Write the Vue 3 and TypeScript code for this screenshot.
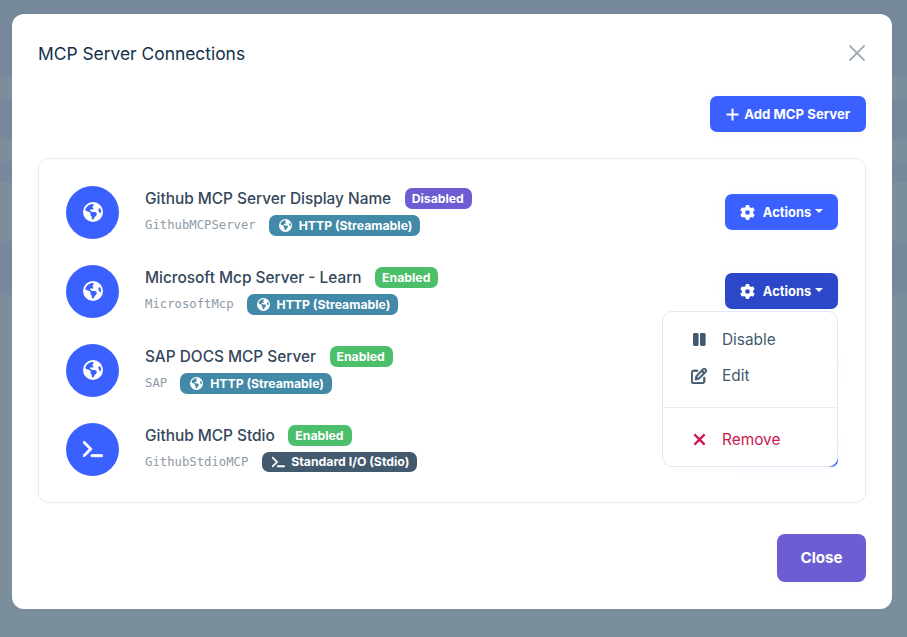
<script setup lang="ts">
interface Server {
  name: string
  id: string
  enabled: boolean
  stdio: boolean
}
const servers: Server[] = [
  { name: 'Github MCP Server Display Name', id: 'GithubMCPServer', enabled: false, stdio: false },
  { name: 'Microsoft Mcp Server - Learn', id: 'MicrosoftMcp', enabled: true, stdio: false },
  { name: 'SAP DOCS MCP Server', id: 'SAP', enabled: true, stdio: false },
  { name: 'Github MCP Stdio', id: 'GithubStdioMCP', enabled: true, stdio: true },
]
const earth = 'M57.7 193l9.4 16.4c8.3 14.5 21.9 25.2 38 29.8L163 255.7c17.2 4.9 29 20.6 29 38.5v39.9c0 11 6.2 21 16 25.9s16 14.9 16 25.9v39c0 15.6 14.9 26.9 29.9 22.6c16.1-4.6 28.6-17.5 32.7-33.8l2.8-11.2c4.2-16.9 15.2-31.4 30.3-40l8.1-4.6c15-8.5 24.2-24.5 24.2-41.7v-8.3c0-12.7-5.1-24.9-14.1-33.9l-3.9-3.9c-9-9-21.2-14.1-33.9-14.1H257c-11.1 0-22.1-2.9-31.8-8.4l-34.5-19.7c-4.3-2.5-7.6-6.5-9.2-11.2c-3.2-9.6 1.1-20 10.2-24.5l5.9-3c6.6-3.3 14.3-3.9 21.3-1.5l23.2 7.7c8.2 2.7 17.2-.4 21.9-7.5c4.7-7 4.2-16.3-1.2-22.8l-13.6-16.3c-10-12-9.9-29.5 .3-41.3l15.7-18.3c8.8-10.3 10.2-25 3.5-36.7l-2.4-4.2c-3.5-.2-6.9-.3-10.4-.3C163.1 48 84.4 108.9 57.7 193zM464 256c0-36.8-9.6-71.4-26.4-101.5L412 164.8c-15.7 6.3-23.8 23.8-18.5 39.8l16.9 50.7c3.5 10.4 12 18.3 22.6 20.9l29.1 7.3c1.2-9 1.8-18.2 1.8-27.5zM0 256a256 256 0 1 1 512 0A256 256 0 1 1 0 256z'
const terminal = 'M9.4 86.6C-3.1 74.1-3.1 53.9 9.4 41.4s32.8-12.5 45.3 0l192 192c12.5 12.5 12.5 32.8 0 45.3l-192 192c-12.5 12.5-32.8 12.5-45.3 0s-12.5-32.8 0-45.3L178.7 256 9.4 86.6zM256 416H544c17.7 0 32 14.3 32 32s-14.3 32-32 32H256c-17.7 0-32-14.3-32-32s14.3-32 32-32z'
const gear = 'M495.9 166.6c3.2 8.7 .5 18.4-6.4 24.6l-43.3 39.4c1.1 8.3 1.7 16.8 1.7 25.4s-.6 17.1-1.7 25.4l43.3 39.4c6.9 6.2 9.6 15.9 6.4 24.6c-4.4 11.9-9.7 23.3-15.8 34.3l-4.7 8.1c-6.6 11-14 21.4-22.1 31.2c-5.9 7.2-15.7 9.6-24.5 6.8l-55.7-17.7c-13.4 10.3-28.2 18.9-44 25.4l-12.5 57.1c-2 9.1-9 16.3-18.2 17.8c-13.8 2.3-28 3.5-42.5 3.5s-28.7-1.2-42.5-3.5c-9.2-1.5-16.2-8.7-18.2-17.8l-12.5-57.1c-15.8-6.5-30.6-15.1-44-25.4L83.1 425.9c-8.8 2.8-18.6 .3-24.5-6.8c-8.1-9.8-15.5-20.2-22.1-31.2l-4.7-8.1c-6.1-11-11.4-22.4-15.8-34.3c-3.2-8.7-.5-18.4 6.4-24.6l43.3-39.4C64.6 273.1 64 264.6 64 256s.6-17.1 1.7-25.4L22.4 191.2c-6.9-6.2-9.6-15.9-6.4-24.6c4.4-11.9 9.7-23.3 15.8-34.3l4.7-8.1c6.6-11 14-21.4 22.1-31.2c5.9-7.2 15.7-9.6 24.5-6.8l55.7 17.7c13.4-10.3 28.2-18.9 44-25.4l12.5-57.1c2-9.1 9-16.3 18.2-17.8C227.3 1.2 241.5 0 256 0s28.7 1.2 42.5 3.5c9.2 1.5 16.2 8.7 18.2 17.8l12.5 57.1c15.8 6.5 30.6 15.1 44 25.4l55.7-17.7c8.8-2.8 18.6-.3 24.5 6.8c8.1 9.8 15.5 20.2 22.1 31.2l4.7 8.1c6.1 11 11.4 22.4 15.8 34.3zM256 336a80 80 0 1 0 0-160 80 80 0 1 0 0 160z'
const pen = 'M441 58.9L453.1 71c9.4 9.4 9.4 24.6 0 33.9L424 134.1 377.9 88 407 58.9c9.4-9.4 24.6-9.4 33.9 0zM209.8 256.2L344 121.9 390.1 168 255.8 302.2c-2.9 2.9-6.5 5-10.4 6.1l-58.5 16.7 16.7-58.5c1.1-3.9 3.2-7.5 6.1-10.4zM373.1 25L175.8 222.2c-8.7 8.7-15 19.4-18.3 31.1l-28.6 100c-2.4 8.4-.1 17.4 6.1 23.6s15.2 8.5 23.6 6.1l100-28.6c11.8-3.4 22.5-9.7 31.1-18.3L487 138.9c28.1-28.1 28.1-73.7 0-101.8L474.9 25C446.8-3.1 401.2-3.1 373.1 25zM88 64C39.4 64 0 103.4 0 152V424c0 48.6 39.4 88 88 88H360c48.6 0 88-39.4 88-88V312c0-13.3-10.7-24-24-24s-24 10.7-24 24V424c0 22.1-17.9 40-40 40H88c-22.1 0-40-17.9-40-40V152c0-22.1 17.9-40 40-40H200c13.3 0 24-10.7 24-24s-10.7-24-24-24H88z'
</script>

<template>
  <div class="backdrop">
    <section class="modal">
      <header class="head">
        <h2 class="title">MCP Server Connections</h2>
        <svg class="close-x" viewBox="0 0 16 16" aria-label="Close">
          <path d="M.5 .5L15.5 15.5M15.5 .5L.5 15.5" />
        </svg>
      </header>

      <div class="toolbar">
        <button class="btn add">
          <svg class="plus" viewBox="0 0 13 13"><path d="M6.5 .5V12.5M.5 6.5H12.5" /></svg>
          Add MCP Server
        </button>
      </div>

      <div class="card">
        <div v-for="(s, i) in servers" :key="s.id" class="row">
          <div class="avatar">
            <svg v-if="s.stdio" class="avatar-term" viewBox="0 0 576 512"><path :d="terminal" /></svg>
            <svg v-else class="avatar-earth" viewBox="0 0 512 512"><path :d="earth" /></svg>
          </div>
          <div class="info">
            <div class="line-top">
              <span class="name">{{ s.name }}</span>
              <span class="pill status" :class="s.enabled ? 'on' : 'off'">{{ s.enabled ? 'Enabled' : 'Disabled' }}</span>
            </div>
            <div class="line-bottom">
              <code class="id">{{ s.id }}</code>
              <span class="pill kind" :class="s.stdio ? 'stdio' : 'http'">
                <svg v-if="s.stdio" class="kind-term" viewBox="0 0 576 512"><path :d="terminal" /></svg>
                <svg v-else class="kind-earth" viewBox="0 0 512 512"><path :d="earth" /></svg>
                {{ s.stdio ? 'Standard I/O (Stdio)' : 'HTTP (Streamable)' }}
              </span>
            </div>
          </div>
          <div class="actions">
            <button class="btn act" :class="{ active: i === 1 }">
              <svg class="gear" viewBox="0 0 512 512"><path :d="gear" /></svg>
              Actions<i class="caret"></i>
            </button>
            <div v-if="i === 1" class="menu">
              <div class="item">
                <svg class="i-pause" viewBox="0 0 13 13"><rect x="0" y="0" width="5.6" height="13" rx="1.4" /><rect x="7" y="0" width="5.6" height="13" rx="1.4" /></svg>
                <span>Disable</span>
              </div>
              <div class="item">
                <svg class="i-pen" viewBox="0 0 512 512"><path :d="pen" /></svg>
                <span>Edit</span>
              </div>
              <div class="divider"></div>
              <div class="item danger">
                <svg class="i-x" viewBox="0 0 14 14"><path d="M1.5 1.5L12.5 12.5M12.5 1.5L1.5 12.5" /></svg>
                <span>Remove</span>
              </div>
            </div>
          </div>
        </div>
      </div>

      <footer class="foot">
        <button class="btn close"><span class="close-label">Close</span></button>
      </footer>
    </section>
  </div>
</template>

<style>
html, body { margin: 0; background: #7a8e9c; }
</style>

<style scoped>
.backdrop {
  width: 907px;
  height: 637px;
  box-sizing: border-box;
  padding: 14px 15px 28px 12px;
  background: linear-gradient(
    to bottom,
    #76899a 0 77px,
    #7a8e9c 77px 99px,
    #76899a 99px 139px,
    #7a8e9c 139px 161px,
    #76899a 161px 182px,
    #7a8e9c 182px 241px,
    #76899a 241px 295px,
    #7a8e9c 295px
  );
  font-family: Inter, "Liberation Sans", sans-serif;
  overflow: hidden;
}
.modal {
  height: 595px;
  box-sizing: border-box;
  background: #fff;
  border-radius: 12px;
  padding: 0 26px 27px;
  display: flex;
  flex-direction: column;
}
.head {
  height: 78px;
  display: flex;
  align-items: center;
  justify-content: space-between;
  margin-bottom: 4px;
}
.title {
  margin: 0;
  font-size: 17.4px;
  font-weight: 440;
  color: #12304a;
}
.close-x { width: 16px; height: 16px; margin-right: 1px; }
.close-x path { stroke: #9aa8b4; stroke-width: 1.8; fill: none; }
.toolbar { display: flex; justify-content: flex-end; }
.btn {
  border: 0;
  padding: 0;
  font-family: inherit;
  color: #fff;
  font-weight: 700;
  display: inline-flex;
  align-items: center;
  justify-content: center;
  cursor: pointer;
  box-shadow: 0 0 12px rgba(58, 96, 255, 0.03);
}
.add {
  width: 156px;
  height: 36px;
  gap: 5.5px;
  border-radius: 7px;
  font-size: 13.2px;
  background: #3a60ff;
}
.plus { width: 13px; height: 13px; }
.plus path { stroke: #fff; stroke-width: 2; fill: none; }
.card {
  margin-top: 26px;
  height: 345px;
  box-sizing: border-box;
  border: 1px solid #e8edf3;
  border-radius: 10px;
  padding: 26px 27px;
  display: flex;
  flex-direction: column;
  gap: 26px;
}
.row { height: 53px; display: flex; align-items: center; }
.avatar {
  width: 53px;
  height: 53px;
  flex: none;
  margin-top: 2px;
  border-radius: 50%;
  background: #3a60ff;
  display: flex;
  align-items: center;
  justify-content: center;
}
.avatar-earth { width: 20px; height: 20px; margin-top: -2px; fill: #fff; }
.avatar-term { width: 20px; height: 18px; margin-top: -1px; fill: #fff; stroke: #fff; stroke-width: 22; }
.info { flex: 1; margin-left: 26px; min-width: 0; height: 48px; }
.line-top { display: flex; align-items: center; gap: 13.5px; height: 21px; }
.name { font-size: 15.4px; font-weight: 450; color: #33475b; }
.pill {
  display: inline-flex;
  align-items: center;
  color: #fff;
  font-weight: 700;
  font-size: 12.25px;
  height: 21px;
  padding: 0 8px 0 7px;
  border-radius: 7px;
}
.on { background: #4cbf6a; }
.off { background: #6c5dd3; }
.line-bottom { display: flex; align-items: flex-start; gap: 13px; height: 21px; margin-top: 6px; }
.id {
  font-family: "DejaVu Sans Mono", monospace;
  font-size: 12.25px;
  line-height: 21px;
  color: #8e9aa6;
}
.kind { gap: 7px; padding: 0 8px 0 10px; }
.http { background: #428aa8; }
.stdio { background: #42596e; height: 20px; margin-left: 1px; gap: 6px; padding-right: 8px; }
.kind-earth { width: 13px; height: 13px; fill: #fff; }
.kind-term { width: 13px; height: 12px; fill: #fff; stroke: #fff; stroke-width: 22; }
.actions { position: relative; flex: none; }
.act {
  width: 113px;
  height: 36px;
  padding-top: 1px;
  gap: 8px;
  border-radius: 7px;
  font-size: 12.9px;
  background: #3a60ff;
}
.act.active { background: #2c47c7; }
.gear { width: 15px; height: 15px; fill: #fff; }
.caret {
  width: 0;
  height: 0;
  margin-left: -4px;
  margin-top: -3px;
  border-left: 4px solid transparent;
  border-right: 4px solid transparent;
  border-top: 4px solid #fff;
}
.menu {
  position: absolute;
  z-index: 2;
  top: 38px;
  right: 0;
  width: 176px;
  height: 156px;
  box-sizing: border-box;
  padding: 10px 0 0;
  background: #fff;
  border: 1px solid #e3e9f4;
  border-radius: 10px;
}
.item {
  height: 36px;
  display: flex;
  align-items: center;
  padding-left: 30px;
  gap: 16px;
  font-size: 15.4px;
  font-weight: 400;
  color: #42596e;
}
.item svg { flex: none; fill: #42596e; }
.i-pause { width: 13px; height: 13px; }
.i-pen { width: 16px; height: 16px; margin-left: -2px; margin-right: -1px; stroke: #42596e; stroke-width: 24; }
.i-x { width: 13px; height: 13px; }
.i-x path { stroke: #c8194f; stroke-width: 2.4; fill: none; }
.divider { height: 1px; background: #e8edf3; margin: 13px 0 14px; }
.danger { color: #c8194f; }
.foot { margin-top: auto; display: flex; justify-content: flex-end; }
.close {
  width: 89px;
  height: 48px;
  padding-bottom: 1px;
  border-radius: 8px;
  font-size: 15.2px;
  background: #6c5dd3;
}
</style>
